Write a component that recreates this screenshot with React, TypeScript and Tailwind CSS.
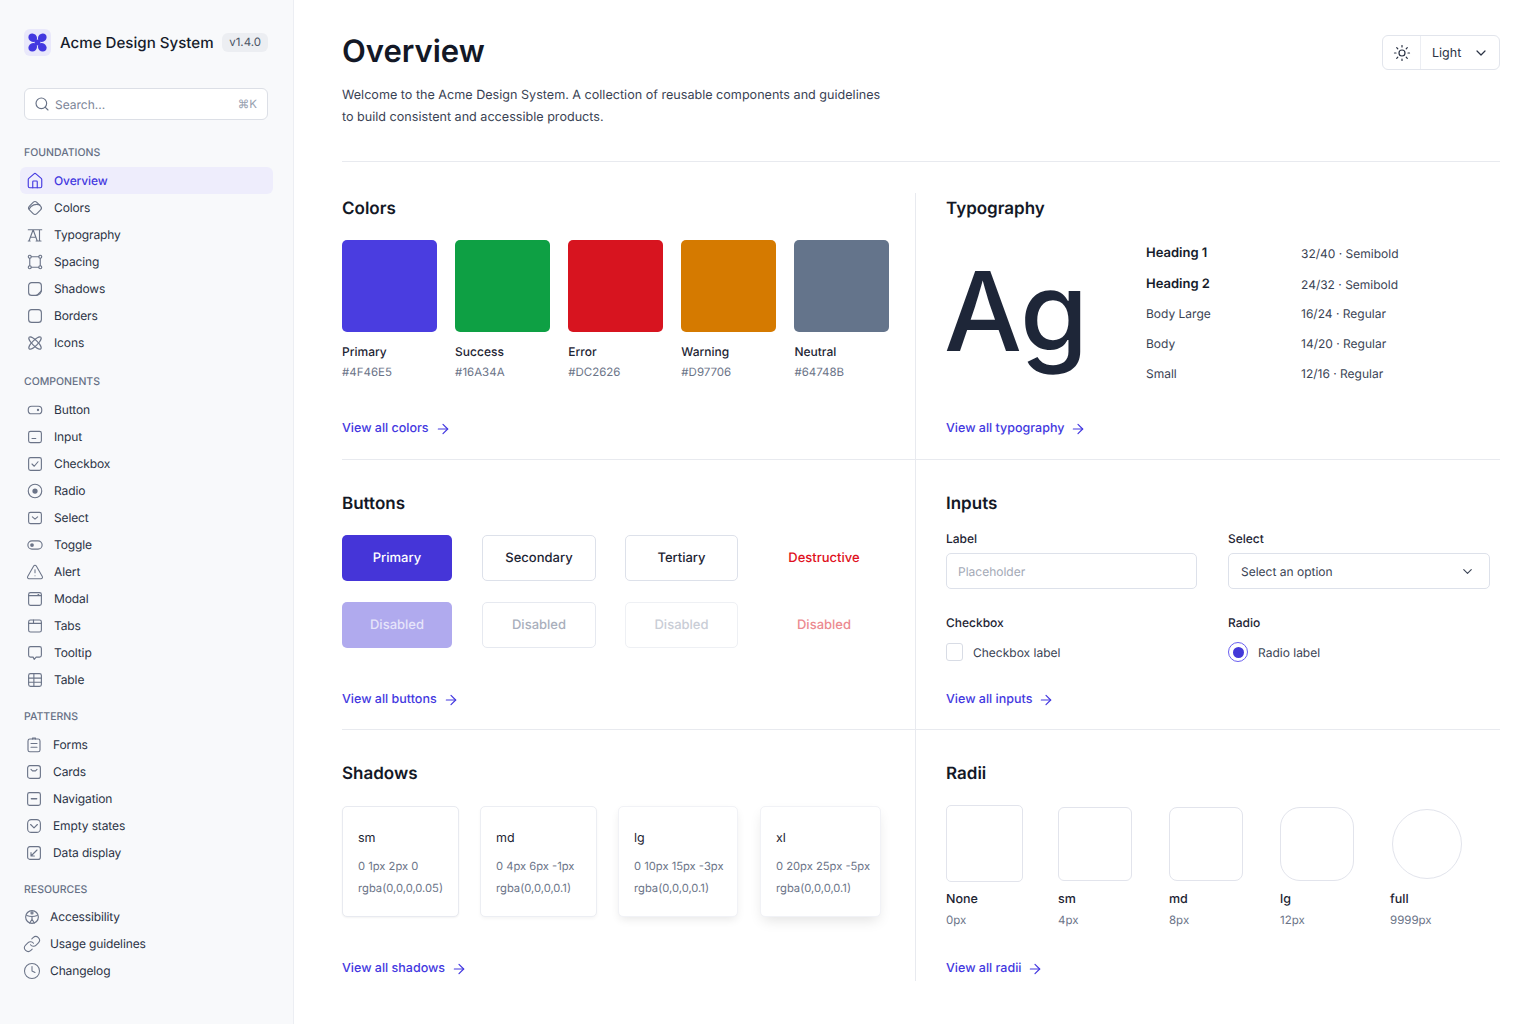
import React from "react";
import { ArrowRight, ChevronDown, Clock, House, Link, Search, Sun, TriangleAlert } from "lucide-react";

const Svg = ({ children, className = "text-[#6b7488]" }: { children: React.ReactNode; className?: string }) => (
  <svg viewBox="0 0 24 24" width="18" height="18" fill="none" stroke="currentColor" strokeWidth="1.5" strokeLinecap="round" strokeLinejoin="round" className={`shrink-0 ${className}`}>
    {children}
  </svg>
);

const I = {
  colors: <Svg><rect x="5" y="5" width="14" height="14" rx="3.5" transform="rotate(45 12 12)" /><path d="M4.5 13c2-5 9-7 14-5" /></Svg>,
  type: <Svg><path d="M3 5h18M9.5 5 4 20M9.5 5 15 20M6 15h7M18 5v15M16 20h4M3 20h2.5M13.5 20H16" /></Svg>,
  spacing: <Svg><circle cx="5" cy="5" r="2" /><circle cx="19" cy="5" r="2" /><circle cx="5" cy="19" r="2" /><circle cx="19" cy="19" r="2" /><path d="M7 5h10M7 19h10M5 7v10M19 7v10" /></Svg>,
  shadows: <Svg><path d="M7.5 3.5h9a4 4 0 0 1 4 4v7l-6 6h-7a4 4 0 0 1-4-4v-9a4 4 0 0 1 4-4Z" /><path d="M20.5 13.5c0 4-2 6-7 7" /></Svg>,
  borders: <Svg><rect x="3.5" y="3.5" width="17" height="17" rx="4" /></Svg>,
  icons: <Svg><ellipse cx="12" cy="12" rx="11" ry="3.6" transform="rotate(45 12 12)" /><ellipse cx="12" cy="12" rx="11" ry="3.6" transform="rotate(-45 12 12)" /></Svg>,
  button: <Svg><rect x="3" y="7" width="18" height="10" rx="4.5" /><circle cx="16" cy="12" r="0.8" /></Svg>,
  input: <Svg><rect x="3.5" y="4.5" width="17" height="15" rx="2.5" /><path d="M8 14h5" /></Svg>,
  checkbox: <Svg><rect x="3.5" y="3.5" width="17" height="17" rx="2.5" /><path d="m8 12 3 3 5-6" /></Svg>,
  radio: <Svg><circle cx="12" cy="12" r="9" /><circle cx="12" cy="12" r="3.5" fill="currentColor" stroke="none" /></Svg>,
  select: <Svg><rect x="3.5" y="4.5" width="17" height="15" rx="2.5" /><path d="m8.5 10.5 3.5 3 3.500-3" /></Svg>,
  toggle: <Svg><rect x="2.500" y="6.500" width="19" height="11" rx="5.500" /><circle cx="8" cy="12" r="2.500" fill="currentColor" stroke="none" /></Svg>,
  alert: <TriangleAlert size={18} strokeWidth={1.4} className="shrink-0 text-[#6b7488]" />,
  modal: <Svg><rect x="3.500" y="3.500" width="17" height="17" rx="2.500" /><path d="M3.500 7.500h17M16 6h1" /></Svg>,
  tabs: <Svg><rect x="3.500" y="4" width="17" height="16" rx="2.500" /><path d="M3.500 8.500h17M10 4v4.500" /></Svg>,
  tooltip: <Svg><path d="M6 3.500h12A2.500 2.500 0 0 1 20.500 6v9a2.500 2.500 0 0 1-2.500 2.500h-4.500L11 20.500l-1.500-3H6A2.500 2.500 0 0 1 3.500 15V6A2.500 2.500 0 0 1 6 3.500Z" /></Svg>,
  table: <Svg><rect x="3.500" y="3.500" width="17" height="17" rx="2.500" /><path d="M3.500 9.500h17M3.500 15h17M10.500 3.500v17" /></Svg>,
  forms: <Svg><rect x="4" y="4" width="16" height="17" rx="2.500" /><path d="M8 10h8M8 15h8M10 4V2.800h4V4" /></Svg>,
  cards: <Svg><rect x="3.500" y="3.500" width="17" height="17" rx="3" /><path d="M8 8.500l2 2h4l2-2" /></Svg>,
  nav: <Svg><rect x="3.500" y="3.500" width="17" height="17" rx="2.500" /><path d="M8.500 11.500h7" strokeWidth="2" /></Svg>,
  empty: <Svg><rect x="3.500" y="3.500" width="17" height="17" rx="5" /><path d="m7.500 10 4.500 4.500 4.500-4.500" /></Svg>,
  data: <Svg><rect x="3.500" y="3.500" width="17" height="17" rx="3" /><path d="M8 11.500V16h4.500M8 16l8-8" /></Svg>,
  a11y: <Svg><circle cx="12" cy="12" r="8.500" /><circle cx="12" cy="6.500" r="1.400" /><path d="M5 10c4 1.500 10 1.500 14 0M12 11v4l-3 5M12 15l3 5" /></Svg>,
  usage: <Link size={18} strokeWidth={1.4} className="shrink-0 text-[#6b7488]" />,
  clock: <Clock size={18} strokeWidth={1.4} className="shrink-0 text-[#6b7488]" />,
};

const Row = ({ icon, label, inset }: { icon: React.ReactNode; label: string; inset: string }) => (
  <div className={`flex h-[27px] items-center text-[12px] tracking-[-0.01em] text-[#2b3345] ${inset}`}>
    {icon}
    <span className="pt-px">{label}</span>
  </div>
);

const Head = ({ children, className }: { children: React.ReactNode; className: string }) => (
  <div className={`h-4 pl-6 pt-px text-[10.500px] font-medium leading-4 text-[#667085] ${className}`}>{children}</div>
);

const Logo = () => (
  <div className="flex h-[27px] w-[27px] shrink-0 items-center justify-center rounded-md bg-[#e9e8fb]">
    <svg viewBox="0 0 24 24" width="23" height="23" fill="#4338e0">
      <ellipse cx="7" cy="7" rx="4.800" ry="4.200" transform="rotate(45 7 7)" />
      <ellipse cx="17" cy="7" rx="4.800" ry="4.200" transform="rotate(-45 17 7)" />
      <ellipse cx="7" cy="17" rx="4.800" ry="4.200" transform="rotate(-45 7 17)" />
      <ellipse cx="17" cy="17" rx="4.800" ry="4.200" transform="rotate(45 17 17)" />
      <rect x="9" y="9" width="6" height="6" />
    </svg>
  </div>
);

const Sidebar = () => {
  const a = "pl-[6px] gap-[10px]";
  const b = "pl-[5px] gap-[10px]";
  const c = "pl-[3px] gap-[9px]";
  return (
    <aside className="w-[294px] shrink-0 border-r border-[#eceef3] bg-[#f8f9fb] pt-[29px]">
      <div className="flex h-[27px] items-center pl-6 pr-[25px]">
        <Logo />
        <span className="ml-[9px] whitespace-nowrap pt-px text-[15.100px] font-medium text-[#161c2b]">Acme Design System</span>
        <span className="ml-auto rounded-md bg-[#eceef2] px-[7px] py-px text-[11.500px] leading-[17px] text-[#4b5565]">v1.4.0</span>
      </div>
      <div className="mx-6 mt-8 flex h-8 w-[244px] items-center rounded-md border border-[#dcdfe6] bg-white pl-[9px] pr-[10px] text-[12px] text-[#7c8597]">
        <Search size={16} strokeWidth={1.7} className="mr-[5px] text-[#667085]" />
        <span className="pt-[2px]">Search...</span>
        <span className="ml-auto pt-[2px] text-[11.500px] text-[#98a1b0]">⌘K</span>
      </div>
      <Head className="mt-6">FOUNDATIONS</Head>
      <div className="mt-[7px] px-5">
        <div className="flex h-[27px] items-center gap-[10px] rounded-md bg-[#eeedfc] pl-[6px] text-[12px] font-medium tracking-[-0.01em] text-[#4338e0]">
          <House size={18} strokeWidth={1.5} className="shrink-0" />
          <span className="pt-px">Overview</span>
        </div>
        <Row icon={I.colors} label="Colors" inset={a} />
        <Row icon={I.type} label="Typography" inset={a} />
        <Row icon={I.spacing} label="Spacing" inset={a} />
        <Row icon={I.shadows} label="Shadows" inset={a} />
        <Row icon={I.borders} label="Borders" inset={a} />
        <Row icon={I.icons} label="Icons" inset={a} />
      </div>
      <Head className="mt-[17px]">COMPONENTS</Head>
      <div className="mt-[7px] px-5">
        <Row icon={I.button} label="Button" inset={a} />
        <Row icon={I.input} label="Input" inset={a} />
        <Row icon={I.checkbox} label="Checkbox" inset={a} />
        <Row icon={I.radio} label="Radio" inset={a} />
        <Row icon={I.select} label="Select" inset={a} />
        <Row icon={I.toggle} label="Toggle" inset={a} />
        <Row icon={I.alert} label="Alert" inset={a} />
        <Row icon={I.modal} label="Modal" inset={a} />
        <Row icon={I.tabs} label="Tabs" inset={a} />
        <Row icon={I.tooltip} label="Tooltip" inset={a} />
        <Row icon={I.table} label="Table" inset={a} />
      </div>
      <Head className="mt-[15px]">PATTERNS</Head>
      <div className="mt-[7px] px-5">
        <Row icon={I.forms} label="Forms" inset={b} />
        <Row icon={I.cards} label="Cards" inset={b} />
        <Row icon={I.nav} label="Navigation" inset={b} />
        <Row icon={I.empty} label="Empty states" inset={b} />
        <Row icon={I.data} label="Data display" inset={b} />
      </div>
      <Head className="mt-[15px]">RESOURCES</Head>
      <div className="mt-[6px] px-5">
        <Row icon={I.a11y} label="Accessibility" inset={c} />
        <Row icon={I.usage} label="Usage guidelines" inset={c} />
        <Row icon={I.clock} label="Changelog" inset={c} />
      </div>
    </aside>
  );
};

const Title = ({ children }: { children: React.ReactNode }) => (
  <h2 className="h-7 pt-[2px] text-[17px] font-semibold leading-7 text-[#131826]">{children}</h2>
);

const ViewAll = ({ children }: { children: React.ReactNode }) => (
  <a className="mt-auto flex h-5 items-center gap-[6px] text-[12.500px] font-medium text-[#4338e0]">
    <span className="pt-px">{children}</span>
    <ArrowRight size={16} strokeWidth={1.8} />
  </a>
);

const Colors = () => {
  const items = [
    ["Primary", "#4F46E5", "bg-[#4a3de0]"],
    ["Success", "#16A34A", "bg-[#0ea044]"],
    ["Error", "#DC2626", "bg-[#d7141f]"],
    ["Warning", "#D97706", "bg-[#d57a00]"],
    ["Neutral", "#64748B", "bg-[#64748b]"],
  ];
  return (
    <div className="mt-[19px] grid w-[547px] grid-cols-5 gap-x-[18.500px]">
      {items.map(([n, h, c]) => (
        <div key={n}>
          <div className={`h-[92px] rounded-[5px] ${c}`} />
          <div className="mt-[10px] text-[12px] font-medium leading-5 text-[#1d2433]">{n}</div>
          <div className="text-[11.500px] leading-5 text-[#6b7488]">{h}</div>
        </div>
      ))}
    </div>
  );
};

const Typography = () => {
  const rows = [
    ["Heading 1", "32/40 · Semibold", "font-semibold h-[33px] text-[13px] text-[#161c2b]"],
    ["Heading 2", "24/32 · Semibold", "font-semibold h-[29px] text-[13px] text-[#161c2b]"],
    ["Body Large", "16/24 · Regular", "h-[30px] text-[12px]"],
    ["Body", "14/20 · Regular", "h-[30px] text-[12px]"],
    ["Small", "12/16 · Regular", "h-[30px] text-[12px]"],
  ];
  return (
    <div className="mt-[16px] flex">
      <div className="ml-[-2px] w-[202px] pt-[9px] text-[110px] font-medium leading-[130px] tracking-[-0.01em] text-[#1e2638]">Ag</div>
      <div className="w-[300px]">
        {rows.map(([n, v, c]) => (
          <div key={n} className={`flex items-center text-[#3a4354] ${c}`}>
            <span className="w-[155px]">{n}</span>
            <span className="text-[12px] font-normal text-[#3a4354]">{v}</span>
          </div>
        ))}
      </div>
    </div>
  );
};

const Btn = ({ w, className, children }: { w: string; className: string; children: string }) => (
  <div className={`flex h-[46px] items-center justify-center rounded-[5px] pt-[2px] text-[13px] font-medium ${w} ${className}`}>{children}</div>
);

const Buttons = () => (
  <div className="mt-[19px] grid w-[553px] grid-cols-[140px_143px_128px_142px] gap-y-[21px]">
    <Btn w="w-[110px]" className="bg-[#4535d8] text-white">Primary</Btn>
    <Btn w="w-[114px]" className="border border-[#dde1ea] text-[#1d2433]">Secondary</Btn>
    <Btn w="w-[113px]" className="border border-[#dde1ea] text-[#1d2433]">Tertiary</Btn>
    <Btn w="w-[142px]" className="text-[#e01020]">Destructive</Btn>
    <Btn w="w-[110px]" className="bg-[#b0aaee] text-[#e6e4fa]">Disabled</Btn>
    <Btn w="w-[114px]" className="border border-[#e6e9f0] text-[#a9afbc]">Disabled</Btn>
    <Btn w="w-[113px]" className="border border-[#eef0f4] text-[#c9cdd6]">Disabled</Btn>
    <Btn w="w-[142px]" className="text-[#ec8a90]">Disabled</Btn>
  </div>
);

const Label = ({ children }: { children: string }) => (
  <div className="text-[12px] font-medium leading-5 text-[#1d2433]">{children}</div>
);

const Inputs = () => (
  <div className="mt-[13px] grid grid-cols-[282px_262px]">
    <div>
      <Label>Label</Label>
      <div className="mt-1 flex h-9 w-[251px] items-center rounded-[5px] border border-[#dde1ea] px-[11px] pt-px text-[12px] text-[#a3a9b6]">Placeholder</div>
    </div>
    <div>
      <Label>Select</Label>
      <div className="mt-1 flex h-9 w-[262px] items-center justify-between rounded-[5px] border border-[#dde1ea] pl-3 pr-[14px] text-[12px] text-[#3a4354]">
        <span className="pt-px">Select an option</span>
        <ChevronDown size={15} strokeWidth={1.8} />
      </div>
    </div>
    <div className="mt-6">
      <Label>Checkbox</Label>
      <div className="mt-[10px] flex h-[18px] items-center gap-[10px] text-[12px] text-[#3a4354]">
        <span className="h-[18px] w-[17px] rounded-[3px] border border-[#d8dce5]" />
        <span className="pt-px">Checkbox label</span>
      </div>
    </div>
    <div className="mt-6">
      <Label>Radio</Label>
      <div className="mt-[10px] flex h-[18px] items-center gap-[10px] text-[12px] text-[#3a4354]">
        <span className="flex h-5 w-5 items-center justify-center rounded-full border-[1.500px] border-[#6a5ff0]">
          <span className="h-[11px] w-[11px] rounded-full bg-[#4338d8]" />
        </span>
        <span className="pt-px">Radio label</span>
      </div>
    </div>
  </div>
);

const Shadows = () => {
  const items = [
    ["sm", "0 1px 2px 0", "rgba(0,0,0,0.05)", "w-[117px] shadow-[0_1px_2px_0_rgba(0,0,0,0.05)]", "border-[#e8eaf0]"],
    ["md", "0 4px 6px -1px", "rgba(0,0,0,0.1)", "w-[117px] shadow-[0_2px_4px_-1px_rgba(0,0,0,0.06)]", "border-[#eceef3]"],
    ["lg", "0 10px 15px -3px", "rgba(0,0,0,0.1)", "w-[120px] shadow-[0_4px_10px_-2px_rgba(0,0,0,0.1)]", "border-[#f1f2f6]"],
    ["xl", "0 20px 25px -5px", "rgba(0,0,0,0.1)", "ml-px w-[121px] shadow-[0_6px_14px_-3px_rgba(0,0,0,0.12)]", "border-[#f1f2f6]"],
  ];
  return (
    <div className="mt-[20px] flex gap-[21px]">
      {items.map(([n, a, b, c, d]) => (
        <div key={n} className={`h-[111px] rounded-[5px] border bg-white pl-[15px] pt-[22px] ${c} ${d}`}>
          <div className="text-[12.500px] leading-5 text-[#1d2433]">{n}</div>
          <div className="mt-[6px] whitespace-nowrap text-[11.200px] leading-[22px] text-[#6b7488]">{a}</div>
          <div className="whitespace-nowrap text-[11.200px] leading-[22px] text-[#6b7488]">{b}</div>
        </div>
      ))}
    </div>
  );
};

const Radii = () => {
  const items = [
    ["None", "0px", "h-[77px] w-[77px] rounded-[5px]"],
    ["sm", "4px", "h-[74px] w-[74px] rounded-md"],
    ["md", "8px", "h-[74px] w-[74px] rounded-lg"],
    ["lg", "12px", "h-[74px] w-[74px] rounded-[20px]"],
    ["full", "9999px", "ml-[2px] h-[70px] w-[70px] rounded-full"],
  ];
  return (
    <div className="mt-[19px] grid grid-cols-[112px_111px_111px_110px_80px]">
      {items.map(([n, v, c]) => (
        <div key={n}>
          <div className="flex h-[77px] items-center">
            <div className={`border border-[#e2e4ec] ${c}`} />
          </div>
          <div className="mt-[8px] text-[12.500px] font-medium leading-5 text-[#1d2433]">{n}</div>
          <div className="text-[11.500px] leading-5 text-[#6b7488]">{v}</div>
        </div>
      ))}
    </div>
  );
};

export default function App() {
  return (
    <div className="flex min-h-[1024px] bg-white font-['Inter',sans-serif] [text-rendering:geometricPrecision]">
      <Sidebar />
      <main className="flex-1 pl-12 pr-9 pt-[31px]">
        <header className="flex items-start justify-between border-b border-[#e8eaef] pb-[32px]">
          <div>
            <h1 className="h-10 pt-px text-[31px] font-semibold leading-10 text-[#131826]">Overview</h1>
            <p className="mt-[14px] whitespace-nowrap text-[12.600px] leading-[22px] text-[#3a4354]">
              Welcome to the Acme Design System. A collection of reusable components and guidelines
              <br />
              to build consistent and accessible products.
            </p>
          </div>
          <div className="mt-1 flex h-[35px] w-[118px] items-center rounded-md border border-[#e2e5ec] text-[12.500px] text-[#2b3345]">
            <div className="flex h-full w-[38px] items-center justify-center border-r border-[#eceef3]">
              <Sun size={18} strokeWidth={1.6} />
            </div>
            <span className="ml-[11px] pt-[3px]">Light</span>
            <ChevronDown size={16} strokeWidth={1.8} className="ml-auto mr-[10px]" />
          </div>
        </header>
        <div className="mt-[31px] grid grid-cols-[573px_1fr]">
          <section className="flex h-[267px] flex-col border-b border-[#e8eaef] pb-5">
            <Title>Colors</Title>
            <Colors />
            <ViewAll>View all colors</ViewAll>
          </section>
          <section className="flex h-[267px] flex-col border-b border-l border-[#e8eaef] pb-5 pl-[30px]">
            <Title>Typography</Title>
            <Typography />
            <ViewAll>View all typography</ViewAll>
          </section>
          <section className="flex h-[270px] flex-col border-b border-[#e8eaef] pb-[19px] pt-7">
            <Title>Buttons</Title>
            <Buttons />
            <ViewAll>View all buttons</ViewAll>
          </section>
          <section className="flex h-[270px] flex-col border-b border-l border-[#e8eaef] pb-[19px] pl-[30px] pt-7">
            <Title>Inputs</Title>
            <Inputs />
            <ViewAll>View all inputs</ViewAll>
          </section>
          <section className="flex h-[251px] flex-col pb-[2px] pt-7">
            <Title>Shadows</Title>
            <Shadows />
            <ViewAll>View all shadows</ViewAll>
          </section>
          <section className="flex h-[251px] flex-col border-l border-[#e8eaef] pb-[2px] pl-[30px] pt-7">
            <Title>Radii</Title>
            <Radii />
            <ViewAll>View all radii</ViewAll>
          </section>
        </div>
      </main>
    </div>
  );
}
